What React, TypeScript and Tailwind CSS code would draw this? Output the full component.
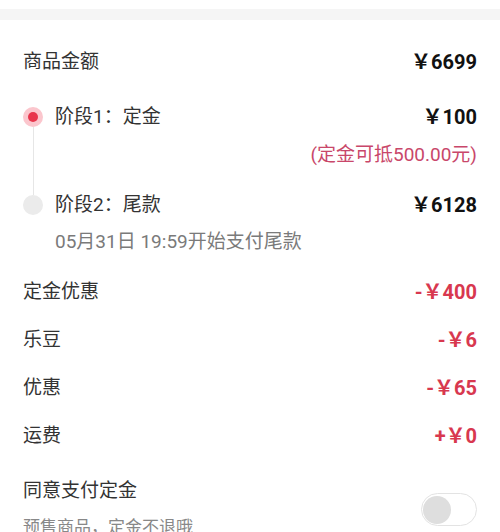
const FONT = { fontFamily: 'Roboto, "Noto Sans CJK SC", sans-serif' };

type Line = { label: string; value: string; red?: boolean };

const FEES: Line[] = [
  { label: "定金优惠", value: "-￥400", red: true },
  { label: "乐豆", value: "-￥6", red: true },
  { label: "优惠", value: "-￥65", red: true },
  { label: "运费", value: "+￥0", red: true },
];

function Row({ label, value, red }: Line) {
  return (
    <div className="h-[48px] flex items-center justify-between">
      <span className="text-[19px] text-[#333]">{label}</span>
      <span className={`text-[20px] font-bold ${red ? "text-[#d8384f]" : "text-[#111]"}`}>{value}</span>
    </div>
  );
}

export default function App() {
  return (
    <div className="w-[500px] h-[532px] overflow-hidden bg-white" style={FONT}>
      <div className="h-[9px]" />
      <div className="h-[11px] bg-[#f5f5f5]" />
      <div className="px-[23px]">
        <div className="mt-[18px]">
          <Row label="商品金额" value="￥6699" />
        </div>

        <div className="relative mt-[13px]">
          <div className="absolute left-[9.5px] top-[28px] h-[68px] w-[1.5px] bg-[#e6e6e6]" />
          <div className="h-[36px] flex items-center justify-between">
            <div className="flex items-center gap-[12px]">
              <div className="w-[20px] h-[20px] rounded-full bg-[#fbc6cd] flex items-center justify-center">
                <div className="w-[10px] h-[10px] rounded-full bg-[#e8354c]" />
              </div>
              <span className="text-[19px] text-[#333]">阶段1：定金</span>
            </div>
            <span className="text-[20px] font-bold text-[#111]">￥100</span>
          </div>
          <div className="mt-[6px] h-[28px] flex items-center justify-end">
            <span className="text-[19px] text-[#c9476a]">(定金可抵500.00元)</span>
          </div>
          <div className="mt-[18px] h-[36px] flex items-center justify-between">
            <div className="flex items-center gap-[12px]">
              <div className="w-[20px] h-[20px] rounded-full bg-[#ebebeb]" />
              <span className="text-[19px] text-[#333]">阶段2：尾款</span>
            </div>
            <span className="text-[20px] font-bold text-[#111]">￥6128</span>
          </div>
          <div className="mt-[5px] h-[28px] flex items-center pl-[32px]">
            <span className="text-[19px] text-[#7a7a7a]">05月31日 19:59开始支付尾款</span>
          </div>
        </div>

        <div className="mt-[12px]">
          {FEES.map((f) => (
            <Row key={f.label} {...f} />
          ))}
        </div>

        <div className="mt-[17px] flex items-center justify-between">
          <div>
            <div className="h-[28px] flex items-center text-[19px] text-[#333]">同意支付定金</div>
            <div className="mt-[9px] h-[28px] flex items-center text-[17px] text-[#888]">预售商品，定金不退哦</div>
          </div>
          <div className="w-[56px] h-[33px] rounded-full border-[1.5px] border-[#e3e3e3] bg-white flex items-center px-[1px]">
            <div className="w-[28px] h-[28px] rounded-full bg-[#dedede]" />
          </div>
        </div>
      </div>
    </div>
  );
}
